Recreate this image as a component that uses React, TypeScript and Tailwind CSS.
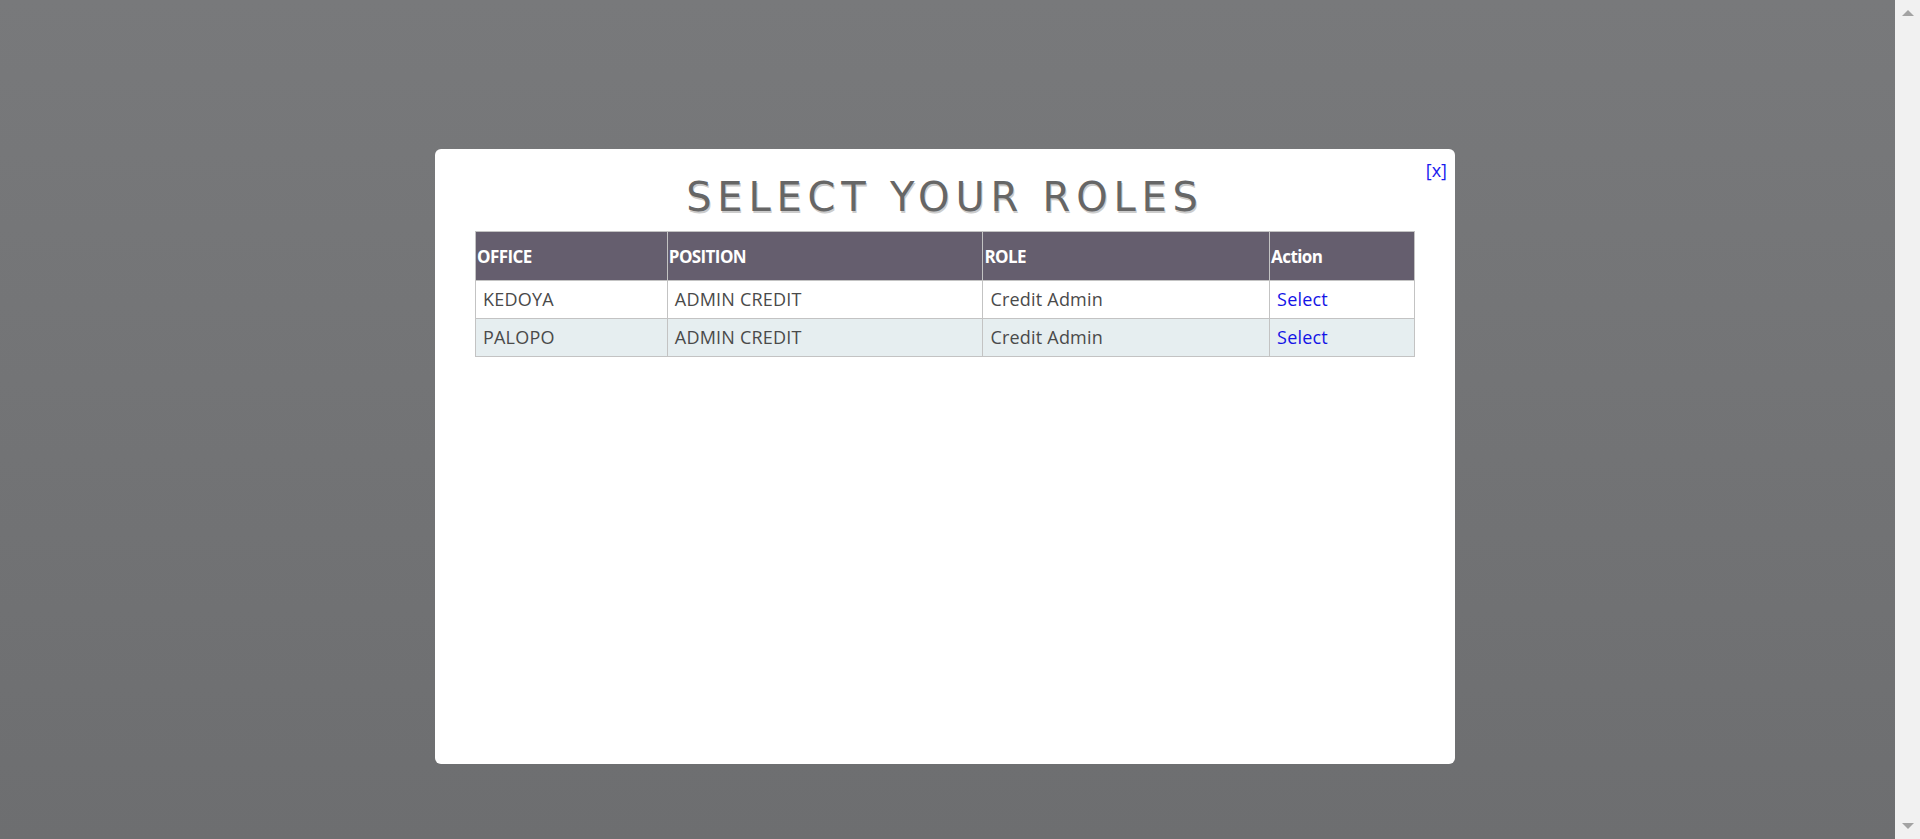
import React from "react";

/* ────────────────────────────────────────────────────────────────
   ROLE DATA
   ──────────────────────────────────────────────────────────────── */

interface RoleRow {
  office: string;
  position: string;
  role: string;
}

const rows: RoleRow[] = [
  { office: "KEDOYA", position: "ADMIN CREDIT", role: "Credit Admin" },
  { office: "PALOPO", position: "ADMIN CREDIT", role: "Credit Admin" },
];

const headers = ["OFFICE", "POSITION", "ROLE", "Action"];

/* ────────────────────────────────────────────────────────────────
   FAKE SCROLLBAR
   ──────────────────────────────────────────────────────────────── */

function Scrollbar() {
  return (
    <div className="w-[25px] flex-shrink-0 bg-[#f1f1f1] flex flex-col justify-between items-center pt-[10px] pb-[10px] pl-[1px]">
      <span className="w-0 h-0 border-l-[6px] border-r-[6px] border-b-[6px] border-l-transparent border-r-transparent border-b-[#a3a3a3]" />
      <span className="w-0 h-0 border-l-[6px] border-r-[6px] border-t-[6px] border-l-transparent border-r-transparent border-t-[#a3a3a3]" />
    </div>
  );
}

/* ════════════════════════════════════════════════════════════════
   MAIN PAGE
   ════════════════════════════════════════════════════════════════ */

export default function App() {
  return (
    <div className="flex h-[839px] w-full overflow-hidden">
      <div className="flex-1 bg-gradient-to-b from-[#78797b] to-[#6d6e70]">
        {/* ── MODAL ── */}
        <div className="relative ml-[435px] mt-[149px] w-[1020px] h-[615px] bg-white rounded-[6px] px-[40px] pt-[24px]">
          <a
            href="#"
            className="absolute top-[8px] right-[8px] text-[18px] leading-[26px] text-[#1a1aee] [font-family:'Open_Sans',sans-serif]"
          >
            [x]
          </a>

          <h1 className="text-center text-[40px] leading-[48px] tracking-[5.8px] text-[#666666] [text-shadow:1px_2px_0_#cccccc] [font-family:'DejaVu_Sans',sans-serif]">
            SELECT YOUR ROLES
          </h1>

          {/* ── ROLE TABLE ── */}
          <table className="mt-[10px] w-[940px] border-collapse [font-family:'Open_Sans',sans-serif]">
            <colgroup>
              <col className="w-[192px]" />
              <col className="w-[316px]" />
              <col className="w-[287px]" />
              <col className="w-[145px]" />
            </colgroup>
            <thead>
              <tr className="h-[49px] bg-[#655e6e]">
                {headers.map((h) => (
                  <th
                    key={h}
                    className="border border-[#c3c3c3] text-left pl-[1px] pt-[2px] text-white font-bold text-[17px] tracking-[-0.6px]"
                  >
                    {h}
                  </th>
                ))}
              </tr>
            </thead>
            <tbody>
              {rows.map((r, i) => (
                <tr
                  key={r.office}
                  className={`h-[38px] ${i % 2 === 1 ? "bg-[#e6eef0]" : "bg-white"}`}
                >
                  <td className="border border-[#c3c3c3] px-[7px] text-[18px] text-[#4a4a4a] tracking-[0.2px]">
                    {r.office}
                  </td>
                  <td className="border border-[#c3c3c3] px-[7px] text-[18px] text-[#4a4a4a] tracking-[0.2px]">
                    {r.position}
                  </td>
                  <td className="border border-[#c3c3c3] px-[7px] text-[18px] text-[#4a4a4a] tracking-[0.2px]">
                    {r.role}
                  </td>
                  <td className="border border-[#c3c3c3] px-[7px] text-[18px] tracking-[0.2px]">
                    <a href="#" className="text-[#1414e6]">
                      Select
                    </a>
                  </td>
                </tr>
              ))}
            </tbody>
          </table>
        </div>
      </div>
      <Scrollbar />
    </div>
  );
}
